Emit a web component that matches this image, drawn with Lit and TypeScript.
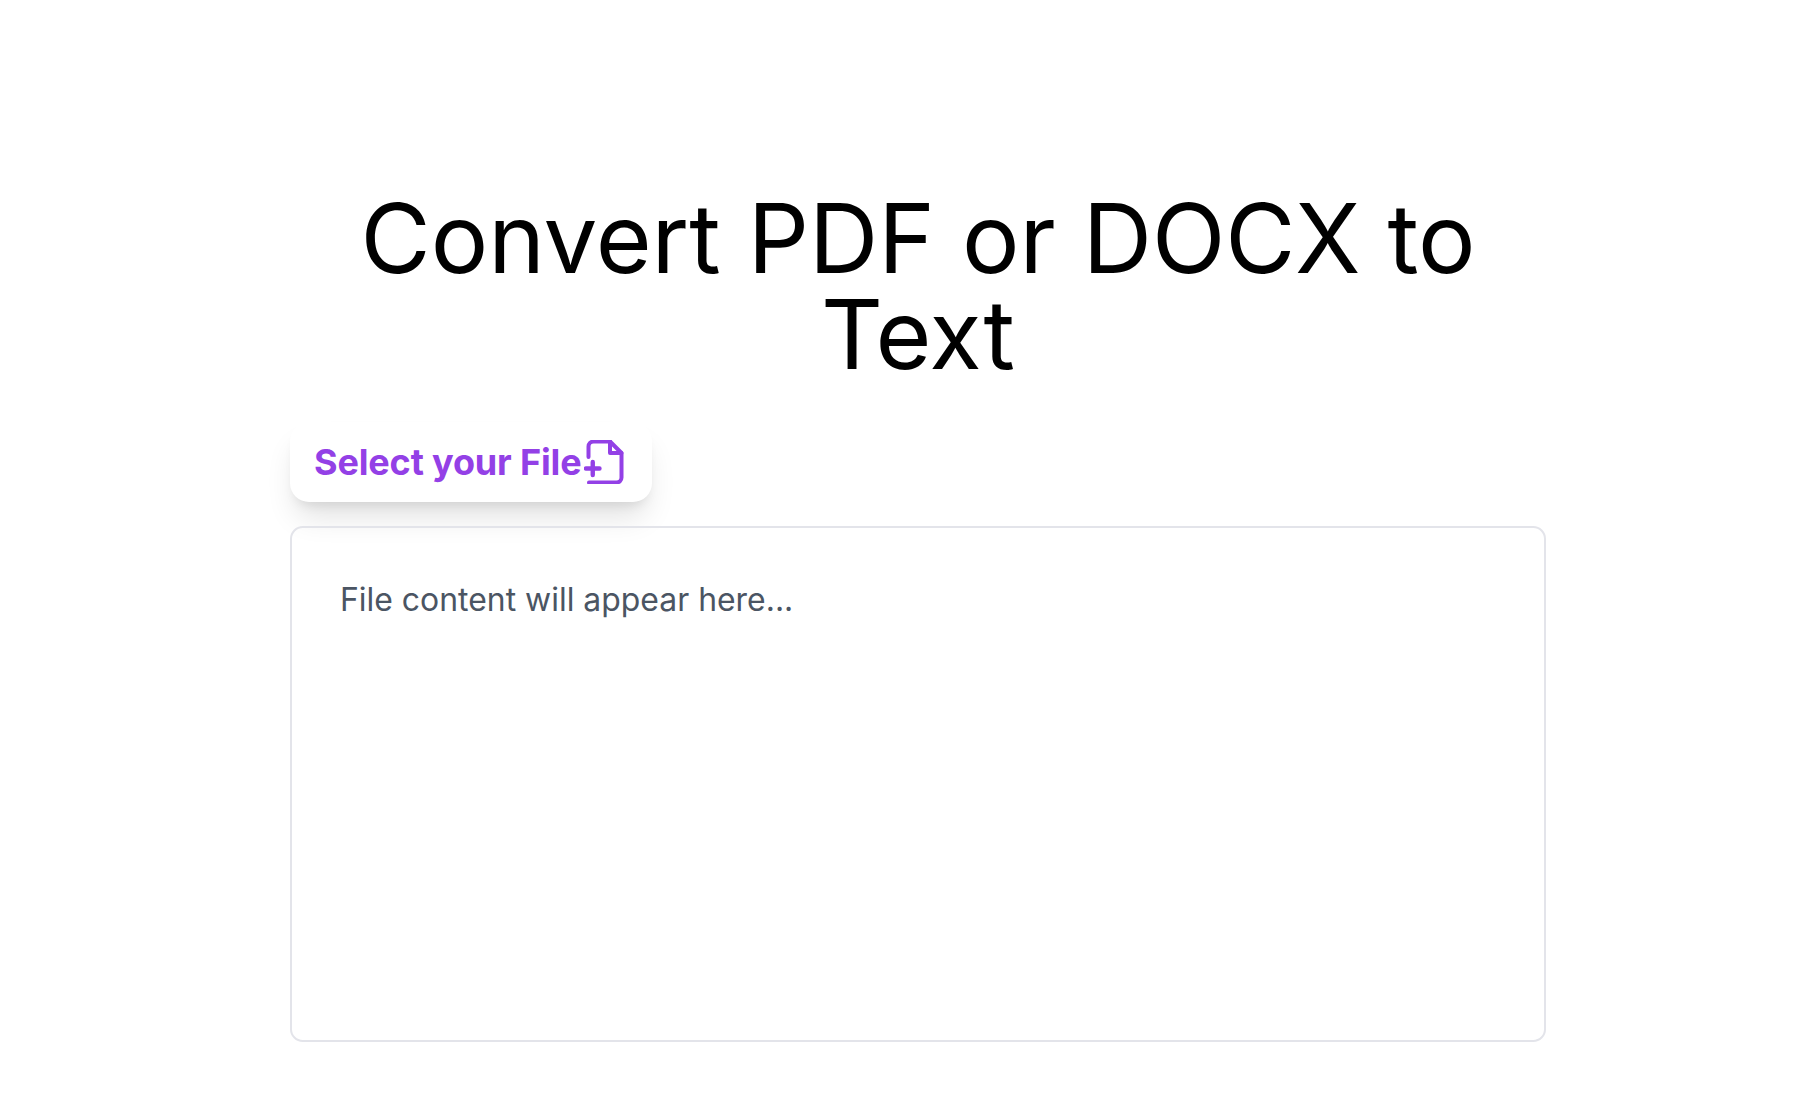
import { LitElement, html, css } from "lit";
import { customElement } from "lit/decorators.js";

@customElement("app-root")
export class AppRoot extends LitElement {
  static styles = css`
    :host {
      display: block;
      min-height: 1094px;
      background: #fff;
      font-family: Inter, "Liberation Sans", sans-serif;
      box-sizing: border-box;
      padding: 190px 0 0 290px;
    }
    .wrap {
      width: 1256px;
      display: flex;
      flex-direction: column;
      align-items: flex-start;
    }
    h1 {
      margin: 0;
      align-self: stretch;
      text-align: center;
      font-size: 96px;
      line-height: 96px;
      font-weight: 400;
      color: #000;
      padding: 0 60px;
    }
    .btn {
      margin-top: 40px;
      display: inline-flex;
      align-items: center;
      gap: 2.5px;
      padding: 0 28px 0 24px;
      height: 80px;
      border-radius: 19px;
      background: #fff;
      color: #9340e6;
      font-size: 36px;
      font-weight: 650;
      letter-spacing: -0.15px;
      box-shadow: 0 20px 30px -6px rgba(0, 0, 0, 0.12), 0 8px 12px -6px rgba(0, 0, 0, 0.1);
    }
    .btn svg {
      width: 40px;
      height: 44px;
    }
    .box {
      margin-top: 24px;
      align-self: stretch;
      box-sizing: border-box;
      height: 516px;
      border: 2px solid #e3e4ea;
      border-radius: 12.8px;
      padding: 48px;
      color: #4b5563;
      font-size: 31.92px;
      line-height: 48px;
    }
  `;

  render() {
    return html`
      <div class="wrap">
        <h1>Convert PDF or DOCX to Text</h1>
        <div class="btn">
          <span>Select your File</span>
          <svg viewBox="0 0 40 44" fill="none" stroke="currentColor" stroke-width="4" stroke-linecap="round" stroke-linejoin="round">
            <path d="M4.5 17V6.5a5 5 0 0 1 5-5H26L37.5 13V37.5a5 5 0 0 1-5 5H5" />
            <path d="M26 1.5V13H37.5" />
            <path d="M2 28.5H15.5M8.75 22V35" stroke-width="4.4" />
          </svg>
        </div>
        <div class="box">File content will appear here...</div>
      </div>
    `;
  }
}
